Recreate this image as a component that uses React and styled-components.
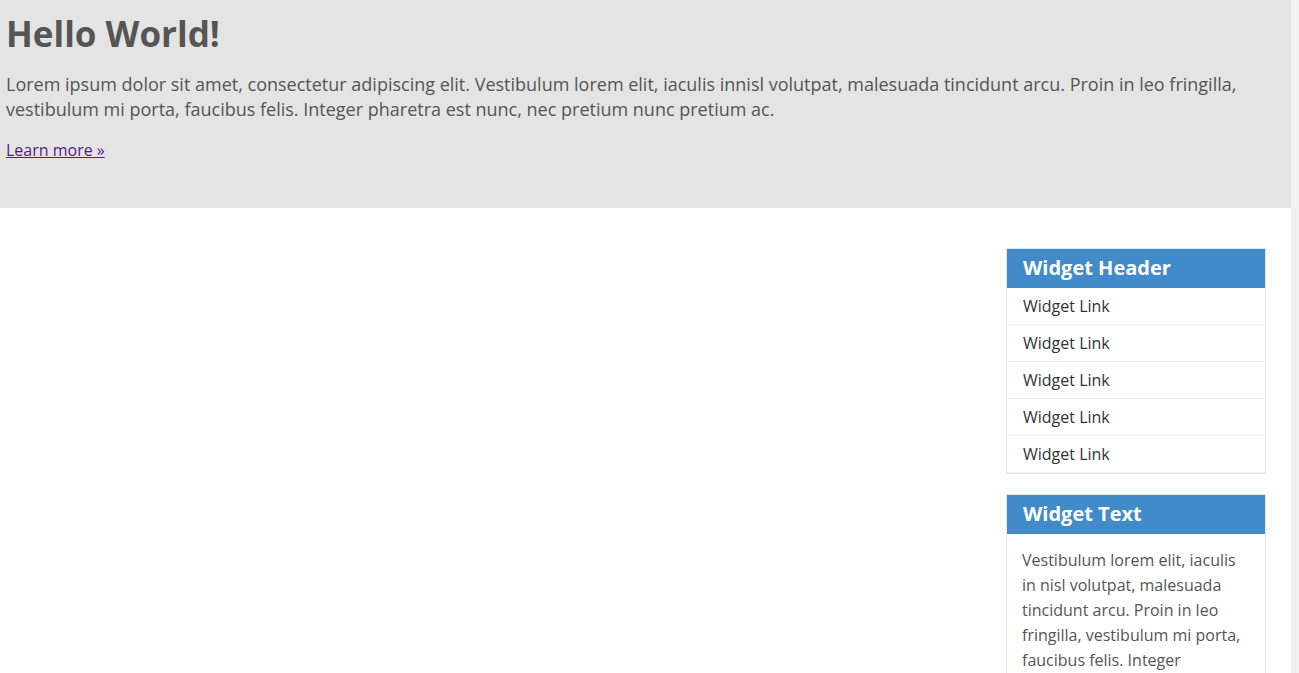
import React from 'react'
import styled, { createGlobalStyle } from 'styled-components'

const GlobalStyle = createGlobalStyle`
  html {
    background: #f1f1f1;
  }

  html, body {
    margin: 0;
    padding: 0;
    font-family: 'Open Sans', 'Liberation Sans', sans-serif;
    color: #555;
  }

  body {
    background: #fff;
    margin-right: 8px;
  }

  ::-webkit-scrollbar {
    width: 8px;
  }

  ::-webkit-scrollbar-track {
    background: #f1f1f1;
  }

  ::-webkit-scrollbar-thumb {
    background: #c1c1c1;
  }
`

const Jumbotron = styled.header`
  background-color: #e4e4e4;
  padding: 12px 6px 46px;
`

const Heading = styled.h1`
  font-size: 35px;
  line-height: 43px;
  font-weight: 700;
  color: #555;
  margin: 0 0 17px;
`

const Lead = styled.p`
  font-size: 18px;
  line-height: 25px;
  margin: 0 0 16px;
  color: #555;
`

const LearnMore = styled.a`
  font-size: 16px;
  line-height: 24px;
  color: #551a8b;
  text-decoration: underline;
`

const Main = styled.main`
  display: flex;
  justify-content: flex-end;
  padding: 40px 25px 60px 0;
  min-height: 720px;
`

const Sidebar = styled.aside`
  width: 260px;
  display: flex;
  flex-direction: column;
  gap: 20px;
`

const Widget = styled.section`
  border: 1px solid #e6e6e6;
  background: #fff;
`

const WidgetHeader = styled.h3`
  margin: 0;
  background-color: #428bca;
  color: #fff;
  font-size: 20px;
  font-weight: 700;
  line-height: 26px;
  padding: 6px 16px 7px;
`

const LinkList = styled.ul`
  list-style: none;
  margin: 0;
  padding: 0;
`

const LinkItem = styled.li`
  border-bottom: 1px solid #eee;
`

const WidgetLink = styled.a`
  display: block;
  padding: 8px 16px;
  font-size: 16px;
  line-height: 20px;
  color: #333;
  text-decoration: none;
`

const WidgetBody = styled.p`
  margin: 0;
  padding: 14px 15px 15px;
  font-size: 16px;
  line-height: 25px;
  color: #555;
`

const links = ['Widget Link', 'Widget Link', 'Widget Link', 'Widget Link', 'Widget Link']

const App = () => (
  <>
    <GlobalStyle />
    <Jumbotron>
      <Heading>Hello World!</Heading>
      <Lead>
        Lorem ipsum dolor sit amet, consectetur adipiscing elit. Vestibulum lorem elit, iaculis innisl volutpat, malesuada tincidunt arcu. Proin in leo fringilla, vestibulum mi porta, faucibus felis. Integer pharetra est nunc, nec pretium nunc pretium ac.
      </Lead>
      <LearnMore href="#">Learn more »</LearnMore>
    </Jumbotron>
    <Main>
      <Sidebar>
        <Widget>
          <WidgetHeader>Widget Header</WidgetHeader>
          <LinkList>
            {links.map((label, i) => (
              <LinkItem key={i}>
                <WidgetLink href="#">{label}</WidgetLink>
              </LinkItem>
            ))}
          </LinkList>
        </Widget>
        <Widget>
          <WidgetHeader>Widget Text</WidgetHeader>
          <WidgetBody>
            Vestibulum lorem elit, iaculis in nisl volutpat, malesuada tincidunt arcu. Proin in leo fringilla, vestibulum mi porta, faucibus felis. Integer pharetra est nunc, nec pretium nunc pretium ac.
          </WidgetBody>
        </Widget>
      </Sidebar>
    </Main>
  </>
)

export default App
